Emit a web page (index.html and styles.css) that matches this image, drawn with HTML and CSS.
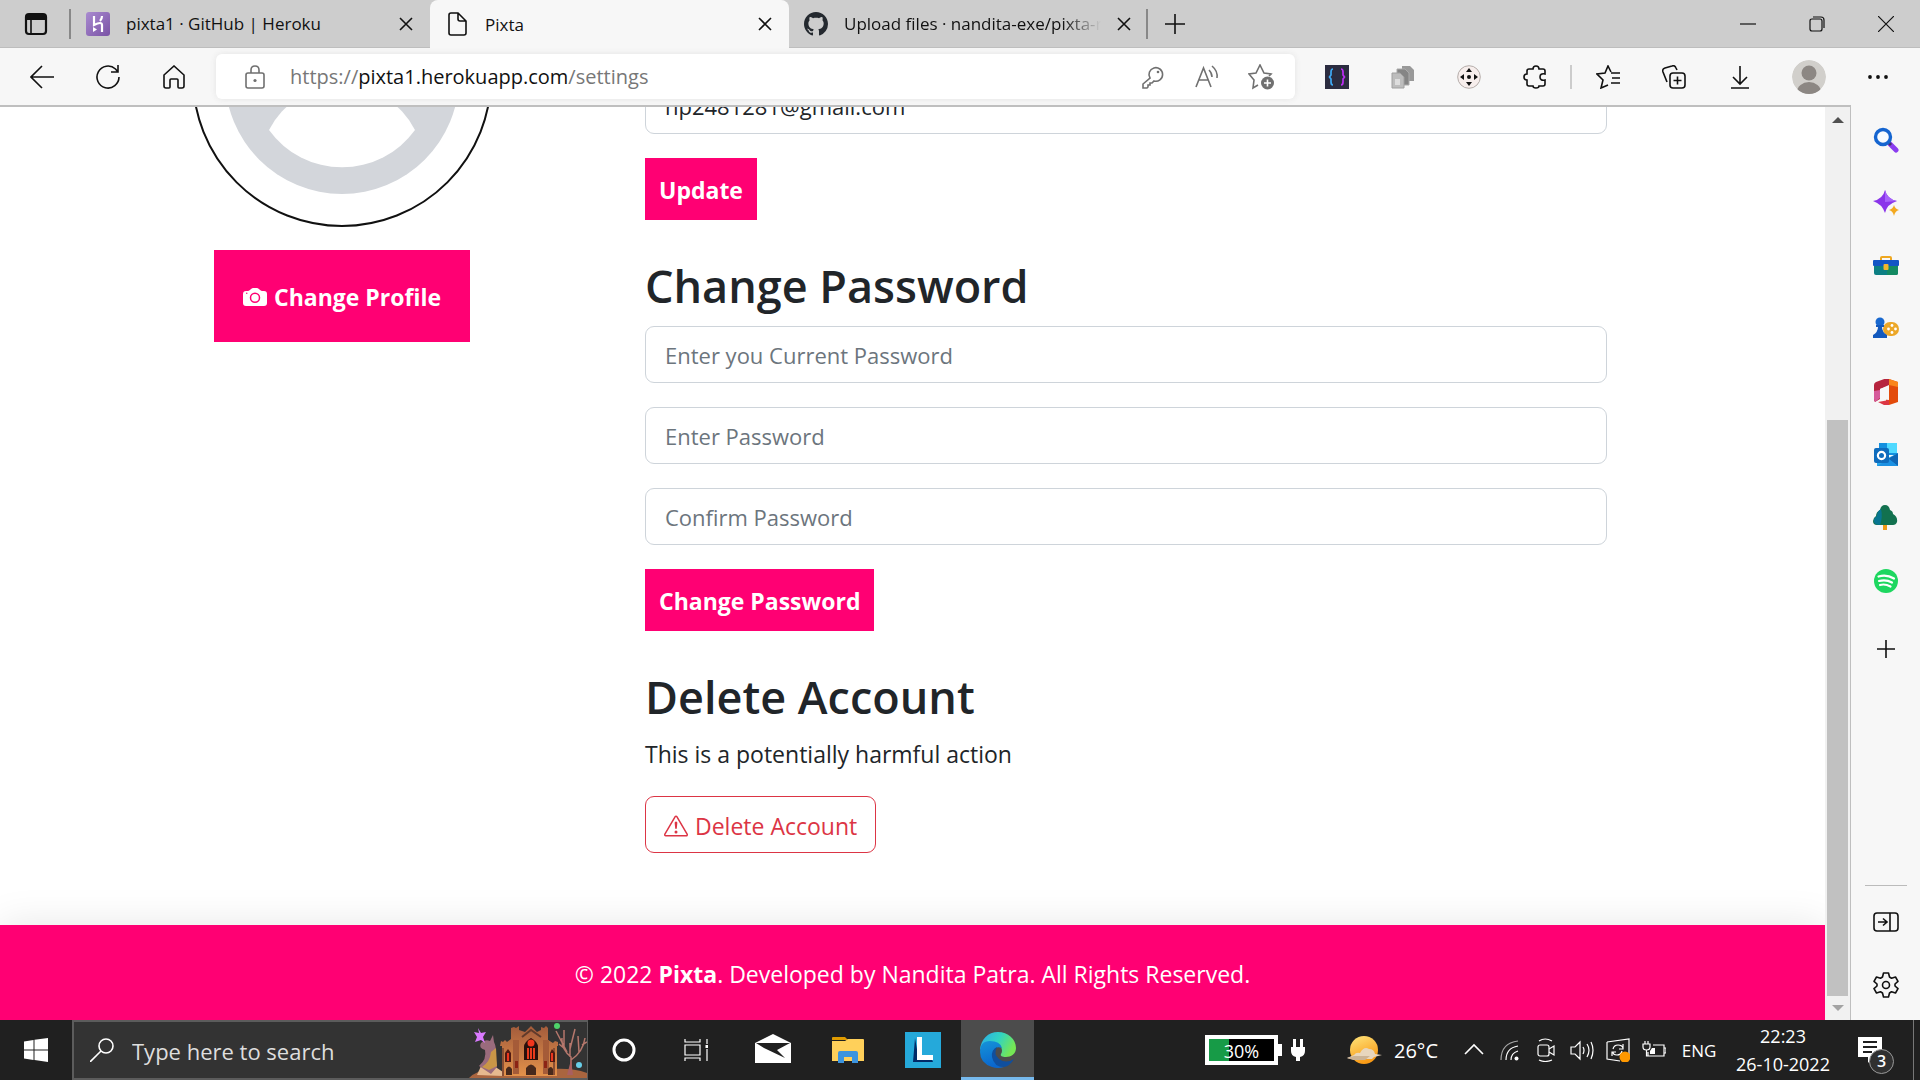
FILE: index.html
```html
<!DOCTYPE html>
<html lang="en">
<head>
<meta charset="utf-8">
<title>Pixta</title>
<link rel="stylesheet" href="styles.css">
</head>
<body>
<div class="tabstrip">
  <button class="tab-actions" aria-label="Tab actions"><svg class="icon" viewBox="0 0 24 24"><rect x="2" y="2" width="20" height="20" rx="3" class="line thick"/><path d="M2 8V4q0-2 2-2h16q2 0 2 2v4z"/><path d="M7 8v14" class="line"/></svg></button>
  <div class="tab">
    <svg class="icon" viewBox="0 0 24 24"><defs><linearGradient id="hk" x2="1" y2="1"><stop stop-color="#a98bd0"/><stop offset="1" stop-color="#7a52a5"/></linearGradient></defs><rect width="24" height="24" rx="3" fill="url(#hk)"/><path d="M8 4v9q8-4 8 0v7M16 4q0 3-2 5" fill="none" stroke="#fff" stroke-width="2.2"/><path d="M7 15l4 2.500-4 2.500z" fill="#fff"/></svg>
    <span class="tab-title">pixta1 · GitHub | Heroku</span>
    <button class="tab-close" aria-label="Close tab"><svg viewBox="0 0 14 14"><path d="M1 1l12 12M13 1L1 13" class="line"/></svg></button>
  </div>
  <div class="tab active">
    <svg class="icon" viewBox="0 0 24 24"><path d="M4 3q0-2 2-2h7l8 8v12q0 2-2 2H6q-2 0-2-2zM13 1v6q0 2 2 2h6" class="line"/></svg>
    <span class="tab-title">Pixta</span>
    <button class="tab-close" aria-label="Close tab"><svg viewBox="0 0 14 14"><path d="M1 1l12 12M13 1L1 13" class="line"/></svg></button>
  </div>
  <div class="tab last">
    <svg class="icon" viewBox="0 0 16 16"><path fill="#24292f" d="M8 0C3.580 0 0 3.580 0 8c0 3.540 2.290 6.530 5.470 7.590.4.070.55-.17.55-.38 0-.19-.01-.82-.01-1.490-2.010.37-2.530-.49-2.690-.94-.09-.23-.48-.94-.82-1.130-.28-.15-.68-.52-.01-.53.63-.01 1.080.58 1.230.82.72 1.210 1.870.87 2.330.66.07-.52.28-.87.51-1.070-1.780-.2-3.640-.89-3.640-3.950 0-.87.31-1.590.82-2.150-.08-.2-.36-1.020.08-2.120 0 0 .67-.21 2.200.82.64-.18 1.320-.27 2-.27s1.360.09 2 .27c1.530-1.040 2.200-.82 2.200-.82.44 1.100.16 1.920.08 2.120.51.56.82 1.270.82 2.150 0 3.070-1.870 3.750-3.650 3.950.29.25.54.73.54 1.480 0 1.070-.01 1.930-.01 2.200 0 .21.15.46.55.38A8.010 8.010 0 0 0 16 8c0-4.420-3.580-8-8-8z"/></svg>
    <span class="tab-title faded">Upload files · nandita-exe/pixta-r</span>
    <button class="tab-close" aria-label="Close tab"><svg viewBox="0 0 14 14"><path d="M1 1l12 12M13 1L1 13" class="line"/></svg></button>
  </div>
  <button class="new-tab" aria-label="New tab"><svg class="icon" viewBox="0 0 24 24"><path d="M12 2v20M2 12h20" class="line"/></svg></button>
  <div class="window-controls">
    <button aria-label="Minimize"><svg viewBox="0 0 16 16"><path d="M0 8h16" class="line thin"/></svg></button>
    <button aria-label="Restore"><svg viewBox="0 0 16 16"><path d="M1 5q0-2 2-2h8q2 0 2 2v8q0 2-2 2H3q-2 0-2-2zM4 1h8q3 0 3 3v8" class="line thin"/></svg></button>
    <button aria-label="Close"><svg viewBox="0 0 16 16"><path d="M0 0l16 16M16 0L0 16" class="line thin"/></svg></button>
  </div>
</div>

<div class="toolbar">
  <button class="tool" aria-label="Back"><svg class="icon" viewBox="0 0 24 24"><path d="M24 12H1M12 1L1 12l11 11" class="line"/></svg></button>
  <button class="tool" aria-label="Refresh"><svg class="icon" viewBox="0 0 24 24"><path d="M23 12A11 11 0 1 1 19.500 4l2.500 3M22 0v7h-7" class="line"/></svg></button>
  <button class="tool" aria-label="Home"><svg class="icon" viewBox="0 0 24 24"><path d="M2 10L12 1l10 9v11q0 2-2 2h-3q-1 0-1-1v-7q0-1-1-1H9q-1 0-1 1v7q0 1-1 1H4q-2 0-2-2z" class="line"/></svg></button>
  <div class="address">
    <svg class="icon grey" viewBox="0 0 24 24"><rect x="3" y="8" width="18" height="15" rx="2" class="line"/><path d="M8 8V5q0-4 4-4t4 4v3" class="line"/><circle cx="12" cy="15.500" r="1.600"/></svg>
    <div class="url">https://<b>pixta1.herokuapp.com</b>/settings</div>
    <button class="grey" aria-label="Passwords"><svg class="icon" viewBox="0 0 24 24"><path d="M9 13a6.800 6.800 0 1 1 4 3l-2 2H9v2H7v2l-1 1H2v-4z" class="line"/><circle cx="17" cy="7" r="1.300"/></svg></button>
    <button class="grey" aria-label="Read aloud"><svg class="icon" viewBox="0 0 24 24"><path d="M1 22L8.500 3 16 22M4 15h9M14 5q3 3 3 7M17 1q6 5 5 12" class="line"/></svg></button>
    <button class="grey" aria-label="Add to favorites"><svg class="icon large" viewBox="0 0 26 26"><path d="M10 21l-5 3 1-8-5-6 7-1 4-8 4 8 7 1-2 2" class="line"/><circle cx="19.500" cy="19" r="6.500"/><path d="M19.500 15.500v7M16 19h7" stroke="#fff" stroke-width="1.600"/></svg></button>
  </div>
  <button class="tool" aria-label="Code extension"><svg class="icon" viewBox="0 0 24 24"><rect width="24" height="24" fill="#2b2c40"/><path d="M8 4Q6 4 6 7v3l-1.500 2L6 14v3q0 3 2 3" fill="none" stroke="#3fa9f5" stroke-width="1.700"/><path d="M16 4q2 0 2 3v3l1.500 2-1.500 2v3q0 3-2 3" fill="none" stroke="#bd2df5" stroke-width="1.700"/></svg></button>
  <button class="tool" aria-label="Copy extension"><svg class="icon" viewBox="0 0 24 24"><path d="M11 1h8l4 4v11H11z" fill="#999"/><path d="M6 4h8l4 4v12H6z" fill="#858585" stroke="#aaa"/><path d="M1 8h8l4 4v11H1z" fill="#bdbdbd" stroke="#a0a0a0"/><path d="M4 14h5v6H4z" fill="#ddd"/></svg></button>
  <button class="tool" aria-label="Move extension"><svg class="icon" viewBox="0 0 24 24"><circle cx="12" cy="12" r="11.300" fill="#f7eeec" stroke="#b5adaa"/><path d="M12 3l3 4H9zM12 21l3-4H9zM3 12l4-3v6zM21 12l-4-3v6z"/><circle cx="12" cy="12" r="2"/></svg></button>
  <button class="tool" aria-label="Extensions"><svg class="icon" viewBox="0 0 24 24"><path d="M6 4h4q0-3 3-3t3 3h4q2 0 2 2v3q-5-1-5 3t5 3v4q0 2-2 2h-4q0 2-3 2t-3-2H6q-2 0-2-2v-4q-3 0-3-3t3-3V6q0-2 2-2z" class="line"/></svg></button>
  <span class="divider"></span>
  <button class="tool" aria-label="Favorites"><svg class="icon" viewBox="0 0 24 24"><path d="M15 7l-3-6-3 7-8 1 6 6-2 8 7-3M15 8h9M16 13h8M15 18h9" class="line"/></svg></button>
  <button class="tool" aria-label="Collections"><svg class="icon" viewBox="0 0 24 24"><rect x="8" y="8" width="15" height="15" rx="3" class="line"/><path d="M15.500 11.500v8M11.500 15.500h8M5 17L1 7q-1-3 2-4l7-2q3-1 4 2l1 2" class="line"/></svg></button>
  <button class="tool" aria-label="Downloads"><svg class="icon" viewBox="0 0 24 24"><path d="M12 1v18M5 12l7 7 7-7M3 23h18" class="line"/></svg></button>
  <button class="tool profile" aria-label="Profile"><svg viewBox="0 0 34 34"><defs><clipPath id="pc"><circle cx="17" cy="17" r="17"/></clipPath></defs><g clip-path="url(#pc)"><circle cx="17" cy="17" r="17" fill="#d1cfcb"/><circle cx="17" cy="13" r="7.500" fill="#8c8783"/><ellipse cx="17" cy="32" rx="12" ry="10" fill="#8c8783"/></g></svg></button>
  <button class="tool" aria-label="Settings and more"><svg class="icon" viewBox="0 0 24 24"><circle cx="4" cy="12" r="1.900"/><circle cx="12" cy="12" r="1.900"/><circle cx="20" cy="12" r="1.900"/></svg></button>
</div>

<div class="workspace">
  <div class="viewport">
    <div class="page">
      <main class="settings">
        <aside class="profile-card">
          <svg class="avatar" viewBox="0 0 300 300"><circle cx="150" cy="150" r="149" fill="#fff" stroke="#111" stroke-width="2"/><circle cx="150" cy="150" r="117" fill="#d3d6db"/><circle cx="150" cy="107" r="43" fill="#fff"/><path d="M77 203a90 90 0 0 0 146 0 82 82 0 0 0-146 0z" fill="#fff"/></svg>
          <button class="btn-pink big"><svg class="icon" viewBox="0 0 16 16"><path d="M10.500 8.500a2.500 2.500 0 1 1-5 0 2.500 2.500 0 0 1 5 0z"/><path d="M2 4a2 2 0 0 0-2 2v6a2 2 0 0 0 2 2h12a2 2 0 0 0 2-2V6a2 2 0 0 0-2-2h-1.172a2 2 0 0 1-1.414-.586l-.828-.828A2 2 0 0 0 9.172 2H6.828a2 2 0 0 0-1.414.586l-.828.828A2 2 0 0 1 3.172 4H2zm.5 2a.5.5 0 1 1 0-1 .5.5 0 0 1 0 1zm9 2.500a3.500 3.500 0 1 1-7 0 3.500 3.500 0 0 1 7 0z"/></svg>Change Profile</button>
        </aside>
        <div class="forms">
          <form class="form">
            <input class="field" type="email" aria-label="Email" value="np2481281@gmail.com">
            <button class="btn-pink" type="button">Update</button>
          </form>
          <form class="form">
            <h1>Change Password</h1>
            <input class="field" type="password" aria-label="Current password" placeholder="Enter you Current Password">
            <input class="field" type="password" aria-label="New password" placeholder="Enter Password">
            <input class="field" type="password" aria-label="Confirm password" placeholder="Confirm Password">
            <button class="btn-pink" type="button">Change Password</button>
          </form>
          <section class="form">
            <h1>Delete Account</h1>
            <p>This is a potentially harmful action</p>
            <button class="btn-danger"><svg class="icon" viewBox="0 0 16 16"><path d="M7.938 2.016A.13.13 0 0 1 8.002 2a.13.13 0 0 1 .063.016.146.146 0 0 1 .054.057l6.857 11.667c.036.060.035.124.002.183a.163.163 0 0 1-.054.060.116.116 0 0 1-.066.017H1.146a.115.115 0 0 1-.066-.017.163.163 0 0 1-.054-.060.176.176 0 0 1 .002-.183L7.884 2.073a.147.147 0 0 1 .054-.057zm1.044-.45a1.130 1.130 0 0 0-1.960 0L.165 13.233c-.457.778.091 1.767.98 1.767h13.713c.889 0 1.438-.99.98-1.767L8.982 1.566z"/><path d="M7.002 12a1 1 0 1 1 2 0 1 1 0 0 1-2 0zM7.100 5.995a.905.905 0 1 1 1.800 0l-.35 3.507a.552.552 0 0 1-1.100 0L7.100 5.995z"/></svg>Delete Account</button>
          </section>
        </div>
      </main>
      <footer class="footer">© 2022 <strong>Pixta</strong>. Developed by Nandita Patra. All Rights Reserved.</footer>
    </div>
    <div class="scrollbar">
      <svg viewBox="0 0 12 6"><path d="M0 6l6-6 6 6z" fill="#505050"/></svg>
      <div class="track"><div class="thumb"></div></div>
      <svg viewBox="0 0 12 6"><path d="M0 0l6 6 6-6z" fill="#a3a3a3"/></svg>
    </div>
  </div>
  <nav class="sidebar" aria-label="Edge sidebar">
    <button aria-label="Search"><svg class="icon large" viewBox="0 0 26 26"><path d="M17 17l6 6" stroke="#8b3df0" stroke-width="5" stroke-linecap="round"/><path d="M15 15l3 3" stroke="#43346b" stroke-width="3"/><circle cx="10" cy="10" r="7.500" fill="#f7fbff" stroke="#1565d0" stroke-width="3.400"/></svg></button>
    <button aria-label="Discover"><svg class="icon large" viewBox="0 0 26 26"><path d="M12 0q2 9 12 11-10 3-12 12Q9 14 0 11 10 9 12 0z" fill="#8a35ea"/><path d="M12 0q2 9 12 11l-12 1z" fill="#a763fa"/><path d="M21 15q1 4 5 5-4 1-5 6-1-5-5-6 4-1 5-5z" fill="#f3a91f"/></svg></button>
    <button aria-label="Tools"><svg class="icon large" viewBox="0 0 26 26"><path d="M8 8V5q0-1 1-1h8q1 0 1 1v3" fill="none" stroke="#eea720" stroke-width="2"/><path d="M1 9h24v11q0 2-2 2H3q-2 0-2-2z" fill="#0c7f83"/><path d="M14 12h11v8q0 2-2 2h-9z" fill="#138a62"/><rect y="7" width="26" height="6" rx="1" fill="#1255c5"/><rect x="10.500" y="11" width="5" height="6" rx="1" fill="#f3b52c"/></svg></button>
    <button aria-label="Games"><svg class="icon large" viewBox="0 0 26 26"><rect x="10" y="6" width="16" height="14" rx="7" fill="#eca728"/><g fill="#fff"><circle cx="19" cy="9.500" r="1.400"/><circle cx="15.500" cy="13" r="1.400"/><circle cx="22.500" cy="13" r="1.400"/><circle cx="19" cy="16.500" r="1.400"/></g><circle cx="7" cy="6" r="4.500" fill="#1868cf"/><path d="M3 9h8v2H9q0 5 5 8v3H0v-3q5-3 5-8H3z" fill="#1359bd"/></svg></button>
    <button aria-label="Office"><svg class="icon large" viewBox="0 0 26 26"><path d="M13 -1l12 4v20l-12 4z" fill="#e34b0b"/><path d="M14-1l2 1v7L7 10v10l-5 3Q1 22 1 20V6q0-2 2-3z" fill="#b6243e"/><path d="M7 11v8l-5 4-1-3v-8z" fill="#d65b9b"/><path d="M5 23l11-2v5l-3 1z" fill="#dc3644"/><path d="M16 6v15l-9-1V10z" fill="#f7f7f7"/><path d="M16 0l9 3v5l-9-2z" fill="#fa861c"/></svg></button>
    <button aria-label="Outlook"><svg class="icon large" viewBox="0 0 26 26"><path d="M6 1h18v12H6z" fill="#1490df"/><path d="M14 1h10v10H14z" fill="#50d9ff"/><path d="M4 11l11 5 10-5v13H4z" fill="#28a8ea"/><path d="M25 11v13L15 17z" fill="#1066b5"/><path d="M4 24l12-7 9 7z" fill="#1c91e3"/><rect x="1" y="6" width="15" height="15" rx="2" fill="#0f6cbd"/><circle cx="8.500" cy="13.500" r="3.600" fill="none" stroke="#fff" stroke-width="2.200"/></svg></button>
    <button aria-label="Tree"><svg class="icon large" viewBox="0 0 26 26"><path d="M10 19h4v6h-4z" fill="#f09b16"/><path d="M12 0q4 0 5 5 3 1 3 4 5 3 4 8-1 3-4 3H4q-4 0-4-4 0-3 3-5 0-4 4-6 1-5 5-5z" fill="#12714f"/><path d="M8 4q-4 2-4 7-4 2-3 6 1 3 6 3 3-8 1-16z" fill="#087591"/></svg></button>
    <button aria-label="Spotify"><svg class="icon large" viewBox="0 0 26 26"><circle cx="13" cy="13" r="12" fill="#1ed760"/><path d="M5.500 8.500q8-2.500 15.500 2M6 13q7-2 13 1.500M7 17q5-1.500 10.500 1.500" fill="none" stroke="#fff" stroke-width="2.200" stroke-linecap="round"/></svg></button>
    <button class="add" aria-label="Customize sidebar"><svg class="icon" viewBox="0 0 24 24"><path d="M12 3v18M3 12h18" class="line"/></svg></button>
    <span class="side-rule"></span>
    <button aria-label="Hide sidebar"><svg class="icon large" viewBox="0 0 26 26"><rect x="1" y="4" width="24" height="18" rx="3" class="line"/><path d="M17 4v18M5 13h8M10 9.500l4 3.500-4 3.500" class="line"/></svg></button>
    <button aria-label="Sidebar settings"><svg class="icon large" viewBox="0 0 26 26"><path d="M10.500 1h5l1 4 2 1.200 4-1.200 2.500 4.300-3 2.700v2l3 2.700-2.500 4.300-4-1.200-2 1.200-1 4h-5l-1-4-2-1.200-4 1.200L1 16.700 4 14v-2L1 9.300 3.500 5l4 1.200 2-1.200z" class="line" stroke-linejoin="round"/><circle cx="13" cy="13" r="3.500" class="line"/></svg></button>
  </nav>
</div>

<div class="taskbar">
  <button class="start" aria-label="Start"><svg class="icon" viewBox="0 0 24 24"><path d="M0 3.500l9.500-1.500v9.500H0zM10.500 1.800L24 0v11.500H10.500zM0 12.500h9.500V22L0 20.500zM10.500 12.500H24V24l-13.500-2z"/></svg></button>
  <div class="search">
    <svg class="icon" viewBox="0 0 24 24"><circle cx="16" cy="8" r="7" class="line"/><path d="M11 13L0 24" class="line"/></svg>
    <input type="text" aria-label="Search Windows" placeholder="Type here to search">
    <svg class="castle" viewBox="0 0 118 56"><defs><linearGradient id="cs" x2="0" y2="1"><stop stop-color="#a35c3c"/><stop offset="1" stop-color="#e3914a"/></linearGradient></defs>
      <path d="M0 56Q12 44 34 50L84 47Q104 46 118 51V56z" fill="#a9653f"/>
      <path d="M8 53l4-9 10-2 12 8v4z" fill="#e6b98f"/>
      <path d="M10 44q8-7 6-16-7-2-4-7 4-4 9-2l3-6 1 7q3 6 1 12l2 13-6 7z" fill="#9a6b7c"/><path d="M22 30l5-4 1 18-8 4-7-3q8-5 9-15z" fill="#c99647"/>
      <path d="M32 19l2 1 2-2 2 2 4-3V6l3-1 2 1 3-2v4l6 2 6-6 6 6 4-2V5l3 1 2-2 2 2v12l5 3 2-2 3 1v4h-1v30H33V24h-2z" fill="url(#cs)"/>
      <path d="M44 18h6v34h-6zM74 18h6v34h-6z" fill="#a55b38"/><path d="M33 26h2v28h-2zM84 26h2v27h-2z" fill="#8a4f34"/>
      <path d="M53 15l9-7 10 7" fill="none" stroke="#613a2b" stroke-width="2"/>
      <path d="M55 38V25q0-5 7-9 7 4 7 9v13z" fill="#29100c"/><circle cx="62" cy="21" r="3.500" fill="#f1361d"/><path d="M58 26h2v11h-2zM61 26h2v11h-2zM64 26h2v11h-2z" fill="#e83a1c"/>
      <path d="M36 40V31l3-4 3 4v9zM81 40V31l2-4 3 4v9z" fill="#501912"/><path d="M38 31h2v8h-2zM82 31h2v8h-2z" fill="#ed361d"/>
      <path d="M57 53v-7q5-7 10 0v7zM37 53v-6q3-5 6 0v6zM79 53v-6q3-4 5 0v6z" fill="#47291c"/><path d="M46 39h3v7h-3zM75 39h3v7h-3z" fill="#8c2414"/>
      <path d="M102 52V35Q92 27 93 16M101 35V21M102 38q12-8 14-22M97 28L90 22M95 24V8M101 27L106 7M110 30L109 14M98 30L87 9M113 23l5-3" fill="none" stroke="#b5776c" stroke-width="1.500"/>
      <path d="M98 53l4-15 2 15z" fill="#a85f61"/>
      <path d="M9 6l3 5 5-1-3 5 2 6-4-3-6 2 2-5-3-5 5 1z" fill="#da7aff"/><circle cx="88" cy="4" r="3" fill="#4ed36a"/><circle cx="110" cy="43" r="3" fill="#68cfe9"/>
    </svg>
  </div>
  <div class="system">
    <button aria-label="Cortana"><svg class="icon" viewBox="0 0 24 24"><circle cx="12" cy="12" r="10" fill="none" stroke="#fff" stroke-width="3"/></svg></button>
    <button aria-label="Task view"><svg class="icon" viewBox="0 0 24 24"><path d="M1 7h15v10H1zM1 1v3h15V1M1 23v-3h15v3M23 1v5M23 11v12" class="line thin"/><path d="M21.500 7h3v3h-3z"/></svg></button>
  </div>
  <div class="apps">
    <button aria-label="Mail"><svg class="app" viewBox="0 0 36 36"><path d="M0 11L18 2l18 9v20H0z"/><path d="M1 11h34L22 18l8 8L9 16z" fill="#202020"/></svg></button>
    <button aria-label="File Explorer"><svg class="app" viewBox="0 0 36 36"><path d="M2 6q0-1 1-1h12l3 3H2z" fill="#e09b00"/><path d="M2 9h13l3-2h15q1 0 1 1v21H2z" fill="#ffd05a"/><path d="M8 31V21q0-2 2-2h16q2 0 2 2v10h-6v-6h-8v6z" fill="#3c94df"/></svg></button>
    <button aria-label="L app"><svg class="app" viewBox="0 0 36 36"><path d="M0 0h36v36H0z" fill="#25a9da"/><path d="M10 6L8 30h20l-2-5-13-2z" fill="#002b68"/><path d="M12 5h5v18h11v5H12z"/></svg></button>
    <button class="running" aria-label="Microsoft Edge"><svg class="app" viewBox="0 0 36 36"><defs><linearGradient id="e1" y2=".4"><stop stop-color="#2ba8ec"/><stop offset=".55" stop-color="#32d4c0"/><stop offset="1" stop-color="#75e655"/></linearGradient><linearGradient id="e2" x2=".3" y2="1"><stop stop-color="#1594d8"/><stop offset="1" stop-color="#0b67ce"/></linearGradient></defs><path d="M0 18C1 7 8 0 18 0s18 7 18 16c0 6-5 9-10 9-4 0-6-1-5-3q2-3 0-7Q15 7 5 12z" fill="url(#e1)"/><path d="M0 20q0-11 10-11 10 0 12 7-9-3-9 7 0 10 11 12-6 2-12 0Q0 31 0 20z" fill="url(#e2)"/><path d="M17 15q-6 3-5 10 2 10 12 10 6-1 10-8-8 5-15 0-6-5-2-12z" fill="#104f9e"/></svg></button>
  </div>
  <div class="tray">
    <div class="battery"><div class="meter"><span>30%</span></div><svg class="plug" viewBox="0 0 14 30"><path d="M2 4h3v8H2zM9 4h3v8H9zM0 12h14v4q0 5-5 6v4H5v-4q-5-1-5-6z"/></svg></div>
    <button class="weather"><svg class="sun" viewBox="0 0 36 30"><defs><linearGradient id="sn" x2=".4" y2="1"><stop stop-color="#ffe57c"/><stop offset="1" stop-color="#f99a16"/></linearGradient></defs><circle cx="18" cy="15" r="14" fill="url(#sn)"/><path d="M8 20q2-3 6-2 4-7 9-4 5 0 6 5l7 1-8 2-2 2H5l-4-1z" fill="#e8d6bd"/><path d="M1 23l7-2h16l-5 4H7z" fill="#cbb395"/></svg>26°C</button>
    <div class="status">
      <button aria-label="Show hidden icons"><svg class="icon" viewBox="0 0 24 24"><path d="M3 16l9-9 9 9" class="line"/></svg></button>
      <button aria-label="Network"><svg class="icon" viewBox="0 0 24 24"><path d="M3 22Q3 5 20 3" class="line thin" opacity=".6"/><path d="M8 22Q8 10 20 8M13 22q0-7 7-9" class="line thin"/><circle cx="18.500" cy="20.500" r="2"/></svg></button>
      <button aria-label="Meet now"><svg class="icon" viewBox="0 0 24 24"><rect x="4" y="7" width="11" height="11" rx="2" class="line thin"/><path d="M15 11l5-3v9l-5-3M5 3q6-4 13 0M5 22q6 3 13 0" class="line thin"/></svg></button>
      <button aria-label="Volume"><svg class="icon" viewBox="0 0 24 24"><path d="M1 9h4l5-5v17l-5-5H1zM13 9q2 3 0 7M17 6q4 6 0 13M21 4q4 8 0 17" class="line thin"/></svg></button>
      <button aria-label="Windows Update"><svg class="icon" viewBox="0 0 24 24"><path d="M1 4l22-3v16M1 4v17l13 2" class="line thin"/><path d="M7 11q1-4 5-4t5 3M17 6v5h-4M16 13q-1 4-5 4t-4-3M6 18v-4h4" class="line thin"/><circle cx="19" cy="19" r="5.500" fill="#ff9800"/></svg></button>
      <button aria-label="Power"><svg class="icon" viewBox="0 0 24 24"><path d="M11 7h11v11H6v-4M22 10h2v5h-2M1 6h7v3q0 3-3.500 3T1 9zM3 3v3M6 3v3M4.500 12v6H6" class="line thin"/><path d="M10 10h3v6H8v-3z"/></svg></button>
    </div>
    <button class="lang">ENG</button>
    <button class="clock"><span>22:23</span><span>26-10-2022</span></button>
    <button class="notices" aria-label="Notifications"><svg class="note" viewBox="0 0 24 26"><path d="M0 0h24v20h-9l-5 6v-6H0z"/><path d="M5 5h14M5 10h14M5 15h9" stroke="#202020" stroke-width="2"/></svg><span class="badge">3</span></button>
  </div>
</div>
</body>
</html>
```
FILE: styles.css
```css
* { box-sizing: border-box; }

body {
  margin: 0;
  height: 100vh;
  display: flex;
  flex-direction: column;
  overflow: hidden;
  background: #f7f7f7;
  color: #212529;
  font-family: "Open Sans", "Noto Sans", sans-serif;
  font-size: 23px;
}

button, input { font: inherit; color: inherit; }

button {
  display: flex;
  align-items: center;
  justify-content: center;
  padding: 0;
  border: 0;
  background: none;
  white-space: nowrap;
}

svg { display: block; flex: none; fill: currentColor; }
.icon { width: 24px; height: 24px; }
.icon.large { width: 26px; height: 26px; }
.line { fill: none; stroke: currentColor; stroke-width: 1.6; }
.line.thick { stroke-width: 2.2; }
.line.thin { stroke-width: 1.2; }
.grey { color: #707070; }

/* Tab strip */
.tabstrip {
  display: flex;
  height: 48px;
  background: #cdcdcd;
  color: #111;
  font-size: 17px;
  border-bottom: 1px solid #bdbdbd;
}
.tab-actions { width: 71px; background: linear-gradient(#888, #888) right center / 2px 30px no-repeat; }
.tab {
  display: flex;
  align-items: center;
  width: 359px;
  padding: 0 17px 0 15px;
  gap: 16px;
}
.tab.active { height: 48px; background: #f7f7f7; border-radius: 8px 8px 0 0; }
.tab.last { background: linear-gradient(#888, #888) right center / 2px 30px no-repeat; }
.tab-title { flex: 1; overflow: hidden; white-space: nowrap; }
.tab-title.faded {
  -webkit-mask-image: linear-gradient(90deg, #000 85%, transparent);
  mask-image: linear-gradient(90deg, #000 85%, transparent);
}
.tab-close svg { width: 14px; height: 14px; }
.new-tab { width: 54px; }
.window-controls { display: flex; margin-left: auto; }
.window-controls button { width: 69px; }
.window-controls svg { width: 16px; height: 16px; }

/* Toolbar */
.toolbar {
  display: flex;
  align-items: center;
  height: 57px;
  padding: 0 9px;
  color: #111;
}
.tool { width: 66px; height: 48px; }
.tool.profile { width: 72px; }
.tool.profile svg { width: 34px; height: 34px; }
.address {
  flex: 1;
  display: flex;
  align-items: center;
  height: 45px;
  margin: 0 9px;
  padding: 0 20px 0 27px;
  background: #fff;
  border-radius: 6px;
  box-shadow: 0 0 6px #e4e4e4;
}
.url { flex: 1; padding-left: 23px; color: #777; font-size: 20px; }
.url b { color: #111; font-weight: 400; }
.address button { width: 54px; }
.address button:last-child { width: 28px; margin-left: 13px; }
.divider { width: 2px; height: 24px; margin: 0 3px 0 2px; background: #ccc; }

/* Page area */
.workspace { flex: 1; display: flex; min-height: 0; }
.viewport {
  flex: 1;
  display: flex;
  min-width: 0;
  border-top: 2px solid #bfbfbf;
  border-right: 1px solid #bfbfbf;
  background: #fff;
}
.page {
  flex: 1;
  display: flex;
  flex-direction: column;
  justify-content: flex-end;
  min-width: 0;
  overflow: hidden;
}
.settings {
  display: grid;
  grid-template-columns: 300px minmax(0, 1fr);
  gap: 153px;
  padding: 0 218px 72px 192px;
}
.profile-card {
  display: flex;
  flex-direction: column;
  align-items: center;
  gap: 23px;
  margin-top: -150px;
}
.avatar { width: 300px; height: 300px; }
.forms { display: flex; flex-direction: column; gap: 36px; }
.form { display: flex; flex-direction: column; align-items: flex-start; gap: 24px; }
h1 { margin: 0 0 -14px; font-size: 45px; font-weight: 600; line-height: 60px; }
p { margin: 0; line-height: 35px; }
.field {
  width: 100%;
  height: 57px;
  padding: 0 19px;
  border: 1px solid #ced4da;
  border-radius: 9px;
  background: #fff;
  outline: 0;
  font-size: 22px;
}
.field::placeholder { color: #6c757d; opacity: 1; }
.btn-pink {
  height: 62px;
  padding: 2px 14px 0;
  background: #ff0073;
  color: #fff;
  font-weight: 700;
}
.btn-pink.big { height: 92px; padding: 2px 29px 0; gap: 7px; }
.btn-danger {
  height: 57px;
  padding: 2px 18px 0;
  gap: 7px;
  border: 1px solid #dc3545;
  border-radius: 9px;
  color: #dc3545;
}
.footer {
  padding: 31px 0 28px;
  background: #ff0073;
  box-shadow: 0 0 40px rgba(0, 0, 0, .1);
  color: #fff;
  line-height: 36px;
  text-align: center;
}

.scrollbar {
  display: flex;
  flex-direction: column;
  align-items: center;
  width: 25px;
  padding: 10px 2px 9px;
  gap: 9px;
  background: #f1f1f1;
}
.scrollbar svg { width: 12px; height: 6px; }
.track { flex: 1; width: 21px; display: flex; align-items: flex-end; }
.thumb { width: 100%; height: calc(100% * 2 / 3); background: #c1c1c1; }

/* Edge sidebar */
.sidebar {
  display: flex;
  flex-direction: column;
  align-items: center;
  width: 69px;
  padding: 3px 0 4px;
  color: #111;
}
.sidebar button { width: 69px; height: 63px; }
.sidebar .add { margin-top: 5px; }
.side-rule { width: 42px; height: 1px; margin: auto 0 4px; background: #bbb; }

/* Taskbar */
.taskbar {
  display: flex;
  height: 60px;
  background: #202020;
  color: #fff;
  font-size: 18px;
}
.start { width: 72px; }
.search {
  display: flex;
  align-items: center;
  width: 516px;
  padding-left: 16px;
  gap: 18px;
  background: #333;
  border: 2px solid #5c5c5c;
  border-right-width: 1px;
}
.search input {
  flex: 1;
  min-width: 0;
  padding: 2px 0 0;
  border: 0;
  outline: 0;
  background: none;
  font-size: 22px;
}
.search input::placeholder { color: #dedede; opacity: 1; }
.castle { width: 118px; height: 56px; }
.system, .apps, .tray, .status { display: flex; }
.system button { width: 72px; }
.apps { margin-left: 4px; gap: 2px; }
.apps button { width: 73px; }
.app { width: 36px; height: 36px; }
.apps .running { background: #4c4c4c; border-bottom: 3px solid #76b9ed; padding-top: 3px; }
.tray { margin-left: auto; align-items: stretch; }
.battery { display: flex; align-items: center; gap: 13px; margin-right: 41px; }
.meter {
  position: relative;
  width: 73px;
  height: 30px;
  border: 4px solid #fff;
  background: linear-gradient(90deg, #179b47 30%, #000 30%);
  line-height: 24px;
  text-align: center;
}
.meter::after {
  content: "";
  position: absolute;
  top: 5px;
  right: -8px;
  width: 4px;
  height: 12px;
  background: #fff;
}
.plug { width: 14px; height: 30px; }
.weather { gap: 12px; font-size: 20px; padding-right: 18px; }
.sun { width: 36px; height: 30px; }
.status button { width: 36px; }
.lang { width: 54px; font-size: 17px; }
.clock { flex-direction: column; width: 114px; line-height: 28px; }
.notices {
  position: relative;
  width: 74px;
  margin-right: 6px;
  padding: 0 14px 0 0;
  border-right: 1px solid #777;
}
.note { width: 24px; height: 26px; }
.badge {
  position: absolute;
  top: 29px;
  left: 29px;
  width: 25px;
  height: 25px;
  border: 1px solid #999;
  border-radius: 50%;
  background: #303030;
  font-size: 16px;
  font-weight: 600;
  line-height: 23px;
}
```
